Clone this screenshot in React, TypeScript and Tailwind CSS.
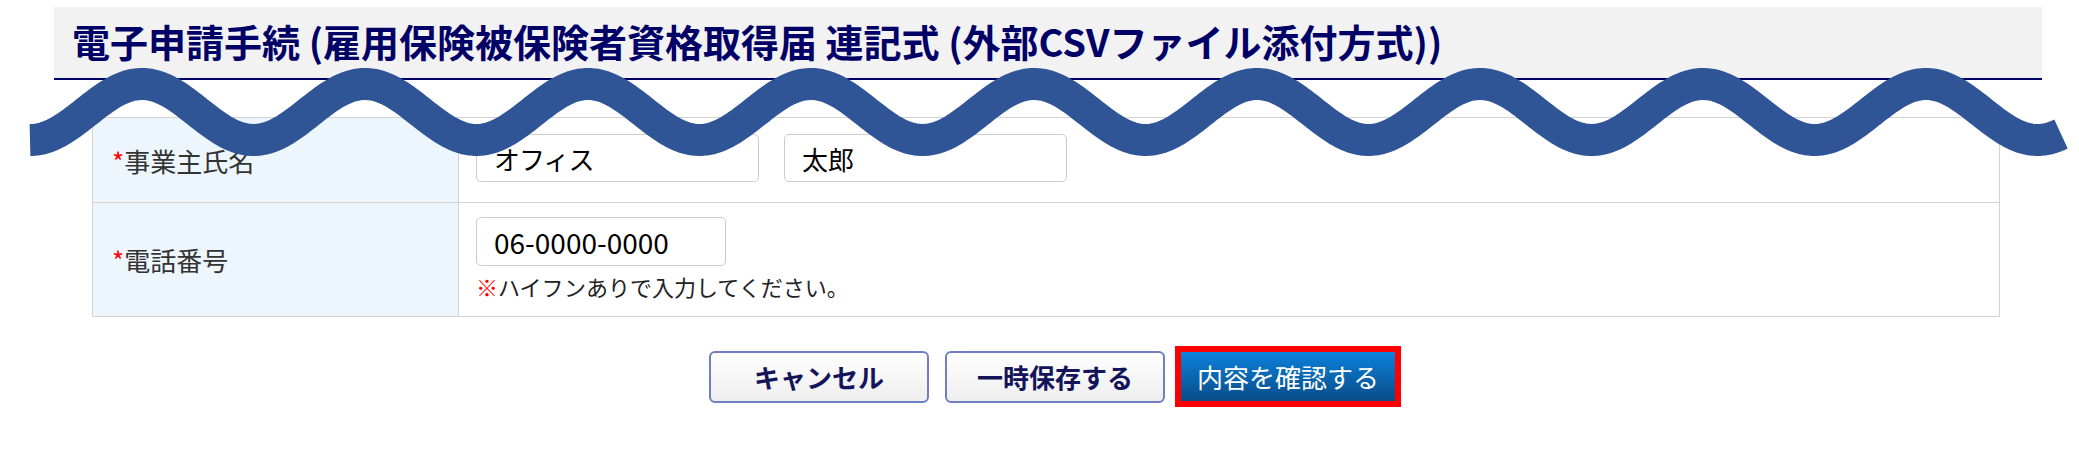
const font = { fontFamily: '"Noto Sans CJK JP", "Noto Sans", sans-serif' };

// hand drawn "break" wave laid over the top of the form
const buildWave = () => {
  const mid = 112;
  const amp = 28;
  const period = 223;
  const crest = 142;
  const pts: string[] = [];
  for (let x = 30; x <= 2062; x += 3) {
    const y = mid - amp * Math.cos((2 * Math.PI * (x - crest)) / period);
    pts.push(`${x},${y.toFixed(2)}`);
  }
  return "M" + pts.join(" L");
};

const wavePath = buildWave();

export default function App() {
  return (
    <div className="relative w-[2079px] h-[452px] bg-white overflow-hidden" style={font}>
      <div className="ml-[54px] mt-[7px] w-[1988px] h-[73px] bg-[#f2f2f2] border-b-2 border-[#000066] flex items-center pl-[18px] pb-[4px]">
        <h1 className="text-[38px] font-bold text-[#000066] leading-none">
          電子申請手続 (雇用保険被保険者資格取得届 連記式 (外部CSVファイル添付方式))
        </h1>
      </div>

      <table className="ml-[92px] mt-[37px] w-[1908px] border-collapse">
        <tbody>
          <tr>
            <th className="w-[366px] bg-[#edf5fd] border border-[#d3d3d3] pl-[19px] text-left font-normal text-[26px] text-[#333333]">
              <span className="text-[#ff0000]">*</span>事業主氏名
            </th>
            <td className="border border-[#d3d3d3] pl-[17px] pt-[16px] pb-[20px]">
              <div className="flex gap-[25px]">
                <div className="w-[283px] h-[48px] border border-[#cccccc] rounded-[5px] flex items-center pl-[17px] text-[26px] text-black tracking-[-1px]">
                  オフィス
                </div>
                <div className="w-[283px] h-[48px] border border-[#cccccc] rounded-[5px] flex items-center pl-[17px] text-[26px] text-black">
                  太郎
                </div>
              </div>
            </td>
          </tr>
          <tr>
            <th className="w-[366px] bg-[#edf5fd] border border-[#d3d3d3] pl-[19px] text-left font-normal text-[26px] text-[#333333]">
              <span className="text-[#ff0000]">*</span>電話番号
            </th>
            <td className="border border-[#d3d3d3] pl-[17px] pt-[14px] pb-[16px]">
              <div className="w-[250px] h-[49px] border border-[#cccccc] rounded-[5px] flex items-center pl-[17px] text-[28px] text-black">
                06-0000-0000
              </div>
              <p className="mt-[6px] text-[22px] leading-[28px] text-[#222222]">
                <span className="text-[#ff0000]">※</span>ハイフンありで入力してください。
              </p>
            </td>
          </tr>
        </tbody>
      </table>

      <div className="flex items-center pl-[709px] mt-[29px]">
        <button className="w-[220px] h-[52px] border-2 border-[#6f7fc6] rounded-[6px] bg-gradient-to-b from-white to-[#eeeeee] text-[26px] font-bold text-[#14145a]">
          キャンセル
        </button>
        <button className="ml-[16px] w-[220px] h-[52px] border-2 border-[#6f7fc6] rounded-[6px] bg-gradient-to-b from-white to-[#eeeeee] text-[26px] font-bold text-[#14145a]">
          一時保存する
        </button>
        <div className="ml-[10px] border-[6px] border-[#ff0000]">
          <button className="w-[214px] h-[49px] bg-gradient-to-b from-[#0a82dc] to-[#0a4c88] text-[26px] text-white">
            内容を確認する
          </button>
        </div>
      </div>

      <svg className="absolute top-0 left-0 pointer-events-none" width="2079" height="452">
        <path d={wavePath} fill="none" stroke="#2f5597" strokeWidth="32" strokeLinecap="butt" strokeLinejoin="round" />
      </svg>
    </div>
  );
}
